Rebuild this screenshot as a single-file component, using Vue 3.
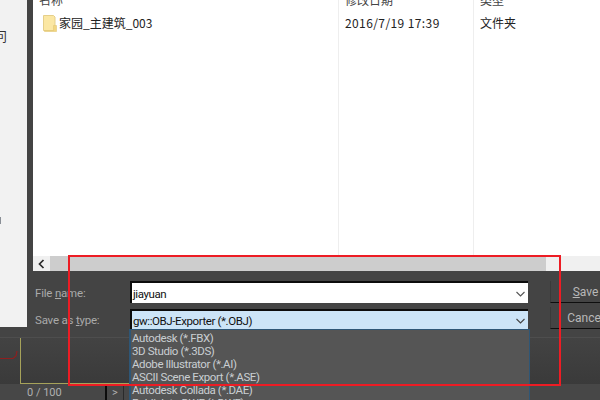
<script setup>
const fileTypes = [
  "Autodesk (*.FBX)",
  "3D Studio (*.3DS)",
  "Adobe Illustrator (*.AI)",
  "ASCII Scene Export (*.ASE)",
  "Autodesk Collada (*.DAE)",
  "Publish to DWF (*.DWF)",
];
</script>

<template>
  <div class="page">
    <div class="dialog">
      <aside class="sidebar">
        <span class="nav-glyph">问</span>
        <span class="nav-mark"></span>
      </aside>

      <div class="main">
        <div class="files">
          <div class="columns">
            <div class="col col-name">
              <div class="head">名称</div>
              <div class="cell name-cell">
                <svg class="folder" width="14" height="17" viewBox="0 0 14 17">
                  <path d="M0.5 0.5H10.5L12 2V15.5H0.5Z" fill="#fbe7a3" stroke="#e5cf8a" />
                  <path d="M10.5 10.5H13.5V16.5H1.5V15.5H10.5Z" fill="#f3d67f" stroke="#e3c877" stroke-width="0.6" />
                </svg>
                <span>家园_主建筑_003</span>
              </div>
            </div>
            <div class="col col-date">
              <div class="head">修改日期</div>
              <div class="cell cell-date">2016/7/19 17:39</div>
            </div>
            <div class="col col-type">
              <div class="head">类型</div>
              <div class="cell">文件夹</div>
            </div>
          </div>
        </div>

        <div class="scrollbar">
          <div class="scroll-btn">
            <svg width="7" height="10" viewBox="0 0 7 10">
              <path d="M5.5 1L1.5 5L5.5 9" fill="none" stroke="#2a2a2a" stroke-width="1.7" />
            </svg>
          </div>
          <div class="scroll-thumb"></div>
        </div>

        <div class="form">
          <div class="fields">
            <div class="field field-name">
              <label class="label">File <u>n</u>ame:</label>
              <div class="input">
                <span>jiayuan</span>
                <svg class="chevron" width="9" height="6" viewBox="0 0 9 6">
                  <path d="M0.5 1L4.5 5L8.5 1" fill="none" stroke="#555" stroke-width="1.1" />
                </svg>
              </div>
            </div>
            <div class="field">
              <label class="label">Save as <u>t</u>ype:</label>
              <div class="input input-active">
                <span>gw::OBJ-Exporter (*.OBJ)</span>
                <svg class="chevron" width="9" height="6" viewBox="0 0 9 6">
                  <path d="M0.5 1L4.5 5L8.5 1" fill="none" stroke="#444" stroke-width="1.1" />
                </svg>
              </div>
            </div>
          </div>
          <div class="buttons">
            <div class="btn"><u>S</u>ave</div>
            <div class="btn">Cancel</div>
          </div>
        </div>
      </div>
    </div>

    <div class="viewport">
      <svg class="curve" width="20" height="20" viewBox="0 0 20 20">
        <path d="M0 14.5H13L16 12L17 7" fill="none" stroke="#8f1f1f" stroke-width="1.2" />
      </svg>
      <div class="frame"></div>
    </div>

    <div class="timebar">
      <div class="counter">0 / 100</div>
      <div class="next">&gt;</div>
    </div>

    <ul class="dropdown">
      <li v-for="item in fileTypes" :key="item">{{ item }}</li>
    </ul>

    <div class="highlight"></div>
  </div>
</template>

<style scoped>
.page {
  position: relative;
  display: flex;
  flex-direction: column;
  width: 600px;
  height: 400px;
  overflow: hidden;
  background: #3d3d3d;
  font-family: Roboto, "Noto Sans CJK SC", sans-serif;
  font-size: 12px;
}

/* ===== SAVE DIALOG ===== */
.dialog {
  display: flex;
  height: 338px;
  flex: none;
  background: #444444;
  border-bottom: 1px solid #4e4e4e;
  box-sizing: border-box;
}

.sidebar {
  display: flex;
  flex-direction: column;
  flex: none;
  width: 27px;
  height: 327px;
  background: #f2f2f2;
  overflow: hidden;
}

.nav-glyph {
  margin: 29px 0 0 -6px;
  font-size: 13px;
  line-height: 16px;
  color: #333;
}

.nav-mark {
  width: 1px;
  height: 7px;
  margin-top: 172px;
  background: #8a8f96;
}

.main {
  display: flex;
  flex-direction: column;
  flex: none;
  width: 567px;
  margin-left: 6px;
}

/* ===== FILE LIST ===== */
.files {
  height: 256px;
  flex: none;
  background: #ffffff;
  overflow: hidden;
}

.columns {
  display: flex;
  height: 100%;
  font-family: "Noto Sans CJK SC", "Liberation Sans", sans-serif;
  color: #222;
}

.col {
  box-sizing: border-box;
  padding-left: 6px;
}

.col-name {
  width: 306px;
  border-right: 1px solid #eeeeee;
}

.col-date {
  width: 135px;
  border-right: 1px solid #eeeeee;
}

.col-type {
  flex: 1;
}

.head {
  height: 14px;
  margin-top: -7px;
  line-height: 14px;
  color: #444;
}

.cell {
  margin-top: 7px;
  line-height: 18px;
}

.cell-date {
  letter-spacing: 0.4px;
}

.name-cell {
  display: flex;
  align-items: center;
  gap: 2px;
  margin-left: 4px;
}

.folder {
  flex: none;
}

/* ===== HORIZONTAL SCROLLBAR ===== */
.scrollbar {
  display: flex;
  height: 15px;
  flex: none;
  background: #f0f0f0;
}

.scroll-btn {
  display: flex;
  align-items: center;
  justify-content: center;
  width: 17px;
}

.scroll-thumb {
  width: 496px;
  background: #cdcdcd;
}

/* ===== NAME AND TYPE FIELDS ===== */
.form {
  display: flex;
  gap: 22px;
  padding: 10px 0 0 2px;
}

.fields {
  display: flex;
  flex-direction: column;
  gap: 6px;
  width: 493px;
}

.field {
  display: flex;
  align-items: center;
}

.field-name .input {
  height: 22px;
}

.label {
  flex: none;
  width: 95px;
  padding-top: 2px;
  color: #aaaaaa;
  font-size: 11.5px;
  letter-spacing: -0.2px;
}

.input {
  display: flex;
  align-items: center;
  justify-content: space-between;
  box-sizing: border-box;
  width: 398px;
  height: 20px;
  padding: 1px 3px 0 1px;
  background: #ffffff;
  border-top: 2px solid #0c0c0c;
  border-left: 2px solid #0c0c0c;
  color: #111;
  font-size: 11.5px;
  letter-spacing: -0.4px;
}

.input-active {
  background: #cce4f7;
}

.buttons {
  display: flex;
  flex: none;
  flex-direction: column;
  gap: 4px;
}

.btn {
  box-sizing: border-box;
  width: 70px;
  height: 22px;
  border-left: 1px solid #3a3a3a;
  border-bottom: 1px solid #0e0e0e;
  color: #b8b8b8;
  line-height: 22px;
  text-align: center;
}

/* ===== BACKGROUND APP ===== */
.viewport {
  position: relative;
  display: flex;
  flex: 1;
  background: linear-gradient(#434343, #3a3a3a);
}

.curve {
  position: absolute;
  left: 0;
  top: 6px;
}

.frame {
  box-sizing: border-box;
  width: 110px;
  margin-left: 20px;
  border-left: 1px solid #a6a25a;
  border-bottom: 1px solid #a6a25a;
}

.timebar {
  display: flex;
  height: 16px;
  flex: none;
  background: #474747;
  color: #b0b0b0;
  font-size: 11px;
  line-height: 18px;
}

.counter {
  width: 107px;
  border-right: 2px solid #0c0c0c;
  box-sizing: border-box;
  padding-left: 27px;
}

.next {
  width: 16px;
  text-align: center;
  border-right: 1px solid #2a2a2a;
}

/* ===== OPEN TYPE LIST ===== */
.dropdown {
  position: absolute;
  left: 129px;
  top: 329px;
  box-sizing: border-box;
  width: 401px;
  height: 80px;
  margin: 0;
  padding: 2px 0 0 1px;
  list-style: none;
  background: #555555;
  border: 1px solid #2e5676;
  border-left-width: 2px;
  color: #c9ced2;
  font-size: 11.5px;
  letter-spacing: -0.4px;
  line-height: 13px;
}

/* annotation drawn over the screenshot */
.highlight {
  position: absolute;
  left: 68px;
  top: 255px;
  width: 489px;
  height: 127px;
  border: 2px solid #ed1c24;
}
</style>
